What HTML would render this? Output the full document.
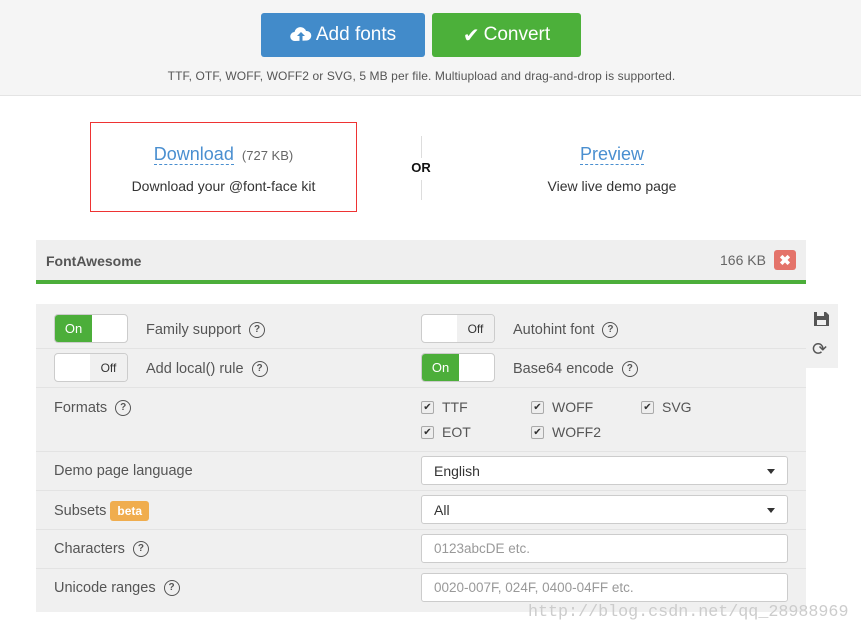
<!DOCTYPE html>
<html><head><meta charset="utf-8"><style>
*{box-sizing:border-box;margin:0;padding:0}
body{width:861px;height:635px;background:#fff;font-family:"Liberation Sans",sans-serif;color:#555;position:relative;overflow:hidden}
.a{position:absolute}
.hdr{left:0;top:0;width:861px;height:96px;background:#f5f5f5;border-bottom:1px solid #e4e4e4}
.btn{top:13px;height:44px;border-radius:3px;color:#fff;font-size:19px;display:flex;align-items:center;justify-content:center;gap:4px}
.tog{width:74px;height:29px;border:1px solid #ccc;border-radius:4px;background:#fff;overflow:hidden;font-size:13px}
.tog .on{position:absolute;left:0;top:0;width:37px;height:100%;background:#4cae3a;color:#fff;display:flex;align-items:center;justify-content:center}
.tog .off{position:absolute;right:0;top:0;width:37px;height:100%;background:#f0f0f0;color:#333;display:flex;align-items:center;justify-content:center;font-size:12px}
.lbl{font-size:14.5px;color:#555;display:flex;align-items:center;gap:8px}
.q{display:inline-block;width:16px;height:16px;border:1.5px solid #555;border-radius:50%;font-size:10px;line-height:13px;text-align:center;font-weight:bold}
.div{left:36px;width:770px;height:1px;background:#e3e3e3}
.cb{font-size:14px;color:#555;display:flex;align-items:center;gap:8px}
.cb i{display:inline-block;width:13px;height:13px;border:1px solid #aaa;border-radius:2px;background:#eee;font-style:normal;font-size:10px;line-height:11px;text-align:center;color:#333}
.inp{left:421px;width:367px;height:29px;background:#fff;border:1px solid #ccc;border-radius:3px;font-size:14px;color:#333;padding-left:12px;display:flex;align-items:center}
.inp.ph{color:#999;font-size:13.5px}
.car{position:absolute;right:12px;top:12px;border-left:4px solid transparent;border-right:4px solid transparent;border-top:5px solid #333}
</style></head><body>
<div class="a hdr"></div>
<div class="a btn" style="left:261px;width:164px;background:#428bca">
<svg width="22" height="18" viewBox="0 0 22 18"><path d="M5 15a4.5 4.5 0 0 1-.5-9A6 6 0 0 1 16 5a4.5 4.5 0 0 1 1 9.5z" fill="#fff"/><path d="M11 6l-4 4h2.5v6h3v-6H15z" fill="#428bca"/></svg>Add fonts</div>
<div class="a btn" style="left:432px;width:149px;background:#4cb03a"><span style="font-size:20px">✔</span>Convert</div>
<div class="a" style="left:0;width:843px;top:69px;text-align:center;font-size:12px;color:#555;letter-spacing:0.1px">TTF, OTF, WOFF, WOFF2 or SVG, 5 MB per file. Multiupload and drag-and-drop is supported.</div>

<div class="a" style="left:90px;top:122px;width:267px;height:90px;border:1px solid #e33"></div>
<div class="a" style="left:90px;top:144px;width:267px;text-align:center"><span style="font-size:18px;color:#4a8fd0;border-bottom:1px dashed #4a8fd0">Download</span> <span style="font-size:13px;color:#666">&nbsp;(727 KB)</span></div>
<div class="a" style="left:90px;top:178px;width:267px;text-align:center;font-size:14px;color:#333">Download your @font-face kit</div>
<div class="a" style="left:421px;top:136px;width:1px;height:22px;background:#ddd"></div>
<div class="a" style="left:421px;top:180px;width:1px;height:20px;background:#ddd"></div>
<div class="a" style="left:405px;top:160px;width:32px;text-align:center;font-size:13px;font-weight:bold;color:#111">OR</div>
<div class="a" style="left:512px;top:144px;width:200px;text-align:center"><span style="font-size:18px;color:#4a8fd0;border-bottom:1px dashed #4a8fd0">Preview</span></div>
<div class="a" style="left:512px;top:178px;width:200px;text-align:center;font-size:14px;color:#333">View live demo page</div>

<div class="a" style="left:36px;top:240px;width:770px;height:40px;background:#efefef"></div>
<div class="a" style="left:36px;top:280px;width:770px;height:4px;background:#4cae3a"></div>
<div class="a" style="left:46px;top:253px;font-size:14px;font-weight:bold;color:#555">FontAwesome</div>
<div class="a" style="left:720px;top:252px;font-size:14px;color:#666">166 KB</div>
<div class="a" style="left:774px;top:250px;width:22px;height:20px;background:#e4736a;border-radius:3px;color:#fff;font-size:14px;font-weight:bold;text-align:center;line-height:20px">✖</div>

<div class="a" style="left:36px;top:304px;width:770px;height:308px;background:#f0f0f0"></div>
<div class="a" style="left:806px;top:304px;width:32px;height:64px;background:#f0f0f0"></div>
<svg class="a" style="left:814px;top:311px" width="15" height="15" viewBox="0 0 15 15"><path d="M0 1h12l3 3v11H0z" fill="#555"/><rect x="3" y="1" width="7" height="4" fill="#f0f0f0"/><rect x="3" y="9" width="9" height="5" fill="#f0f0f0"/></svg>
<div class="a" style="left:812px;top:339px;font-size:18px;color:#555;line-height:20px">⟳</div>

<div class="a tog" style="left:54px;top:314px"><div class="on">On</div></div>
<div class="a lbl" style="left:146px;top:322px">Family support <span class="q">?</span></div>
<div class="a tog" style="left:421px;top:314px"><div class="off">Off</div></div>
<div class="a lbl" style="left:513px;top:322px">Autohint font <span class="q">?</span></div>
<div class="a div" style="top:348px"></div>
<div class="a tog" style="left:54px;top:353px"><div class="off">Off</div></div>
<div class="a lbl" style="left:146px;top:361px">Add local() rule <span class="q">?</span></div>
<div class="a tog" style="left:421px;top:353px"><div class="on">On</div></div>
<div class="a lbl" style="left:513px;top:361px">Base64 encode <span class="q">?</span></div>
<div class="a div" style="top:387px"></div>
<div class="a lbl" style="left:54px;top:400px">Formats <span class="q">?</span></div>
<div class="a cb" style="left:421px;top:399px"><i>✔</i>TTF</div>
<div class="a cb" style="left:531px;top:399px"><i>✔</i>WOFF</div>
<div class="a cb" style="left:641px;top:399px"><i>✔</i>SVG</div>
<div class="a cb" style="left:421px;top:424px"><i>✔</i>EOT</div>
<div class="a cb" style="left:531px;top:424px"><i>✔</i>WOFF2</div>
<div class="a div" style="top:451px"></div>
<div class="a lbl" style="left:54px;top:463px">Demo page language</div>
<div class="a inp" style="top:456px">English<span class="car"></span></div>
<div class="a div" style="top:490px"></div>
<div class="a lbl" style="left:54px;top:501px">Subsets <span style="background:#f0ad4e;color:#fff;font-size:12px;font-weight:bold;padding:3px 7px;border-radius:3px;margin-left:-4px">beta</span></div>
<div class="a inp" style="top:495px">All<span class="car"></span></div>
<div class="a div" style="top:529px"></div>
<div class="a lbl" style="left:54px;top:541px">Characters <span class="q">?</span></div>
<div class="a inp ph" style="top:534px">0123abcDE etc.</div>
<div class="a div" style="top:568px"></div>
<div class="a lbl" style="left:54px;top:580px">Unicode ranges <span class="q">?</span></div>
<div class="a inp ph" style="top:573px">0020-007F, 024F, 0400-04FF etc.</div>
<div class="a" style="left:528px;top:603px;font-family:'Liberation Mono',monospace;font-size:16.7px;color:#ccc;white-space:nowrap">http://blog.csdn.net/qq_28988969</div>
</body></html>
